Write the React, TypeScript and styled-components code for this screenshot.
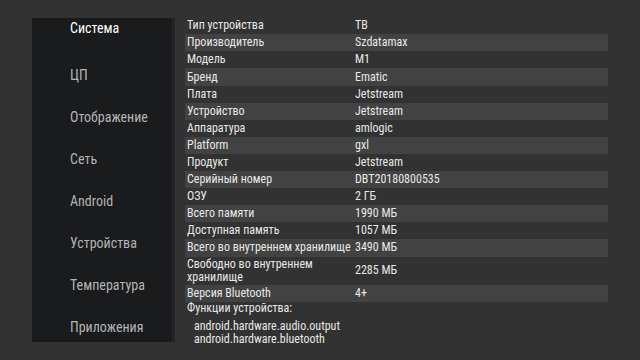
import React from "react";
import styled, { createGlobalStyle } from "styled-components";

const GlobalStyle = createGlobalStyle`
  html, body {
    margin: 0;
    padding: 0;
    background: #323232;
    font-family: Roboto, "Noto Sans", sans-serif;
  }
`;

const Screen = styled.div`
  width: 640px;
  height: 360px;
  display: flex;
  align-items: flex-start;
  background: #323232;
  overflow: hidden;
`;

const Sidebar = styled.nav`
  width: 143px;
  height: 324px;
  margin: 18px 0 0 32px;
  background: #1a1b1d;
  border-right: 3px solid #222325;
  display: flex;
  flex-direction: column;
  padding: 1px 0 0 38px;
  box-sizing: border-box;
  overflow: hidden;
`;

const MenuItem = styled.div<{ $active?: boolean }>`
  flex-shrink: 0;
  height: ${(p) => (p.$active ? "47px" : "42px")};
  line-height: 18px;
  font-size: 14px;
  font-stretch: 81%;
  color: ${(p) => (p.$active ? "#ffffff" : "#b4b4b4")};
  white-space: nowrap;
`;

const Content = styled.div`
  width: 423px;
  margin: 17.2px 0 0 10px;
  display: flex;
  flex-direction: column;
`;

const Row = styled.div<{ $shaded: boolean; $tall?: boolean }>`
  display: grid;
  grid-template-columns: 170px 1fr;
  align-items: center;
  height: ${(p) => (p.$tall ? "28.7px" : "17.1px")};
  background: ${(p) => (p.$shaded ? "#424242" : "transparent")};
  font-size: 12px;
  font-stretch: 85%;
  color: #e8e8e8;
`;

const Label = styled.div<{ $wrap?: boolean }>`
  padding-left: 2px;
  line-height: 13px;
  white-space: ${(p) => (p.$wrap ? "normal" : "nowrap")};
`;

const Value = styled.div`
  line-height: 13px;
`;

const Features = styled.div`
  padding: 0 0 0 2px;
  font-size: 12px;
  font-stretch: 85%;
  line-height: 13px;
  color: #e8e8e8;
`;

const FeatureTitle = styled.div`
  margin-bottom: 5px;
`;

const Feature = styled.div`
  padding-left: 7px;
`;

const menu = [
  "Система",
  "ЦП",
  "Отображение",
  "Сеть",
  "Android",
  "Устройства",
  "Температура",
  "Приложения",
];

const rows: [string, string][] = [
  ["Тип устройства", "ТВ"],
  ["Производитель", "Szdatamax"],
  ["Модель", "M1"],
  ["Бренд", "Ematic"],
  ["Плата", "Jetstream"],
  ["Устройство", "Jetstream"],
  ["Аппаратура", "amlogic"],
  ["Platform", "gxl"],
  ["Продукт", "Jetstream"],
  ["Серийный номер", "DBT20180800535"],
  ["ОЗУ", "2 ГБ"],
  ["Всего памяти", "1990 МБ"],
  ["Доступная память", "1057 МБ"],
  ["Всего во внутреннем хранилище", "3490 МБ"],
  ["Свободно во внутреннем хранилище", "2285 МБ"],
  ["Версия Bluetooth", "4+"],
];

export default function App() {
  return (
    <>
      <GlobalStyle />
      <Screen>
        <Sidebar>
          {menu.map((m, i) => (
            <MenuItem key={m} $active={i === 0}>
              {m}
            </MenuItem>
          ))}
        </Sidebar>
        <Content>
          {rows.map(([label, value], i) => (
            <Row key={label} $shaded={i % 2 === 1} $tall={i === 14}>
              <Label $wrap={i === 14}>{label}</Label>
              <Value>{value}</Value>
            </Row>
          ))}
          <Features>
            <FeatureTitle>Функции устройства:</FeatureTitle>
            <Feature>android.hardware.audio.output</Feature>
            <Feature>android.hardware.bluetooth</Feature>
          </Features>
        </Content>
      </Screen>
    </>
  );
}
